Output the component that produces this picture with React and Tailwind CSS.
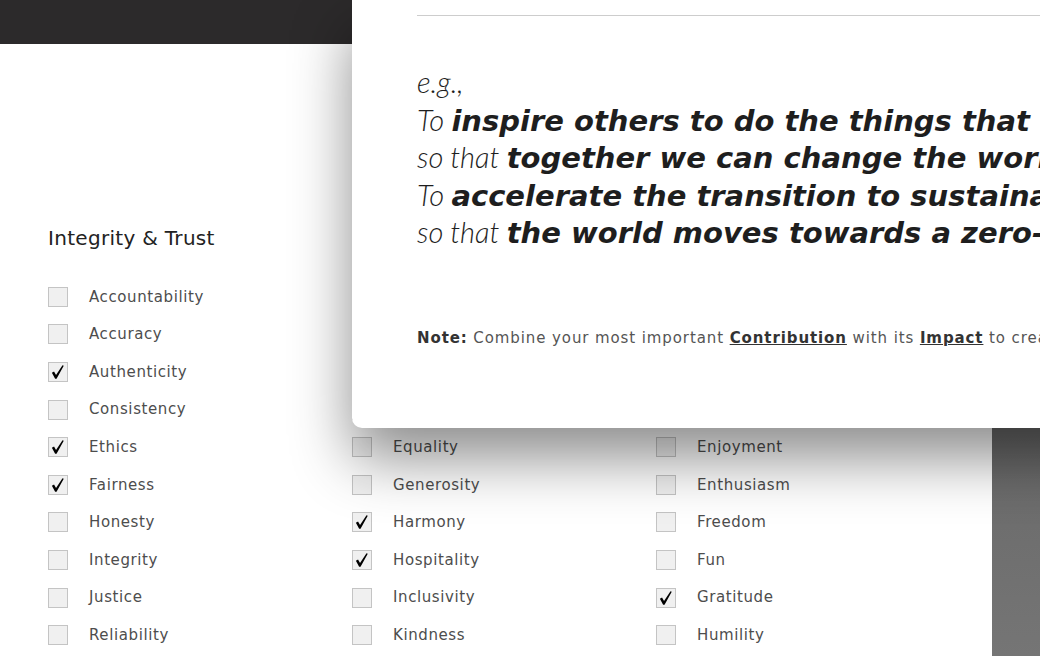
import React from "react";

const columns = [
  {
    title: "Integrity & Trust",
    items: [
      ["Accountability", false],
      ["Accuracy", false],
      ["Authenticity", true],
      ["Consistency", false],
      ["Ethics", true],
      ["Fairness", true],
      ["Honesty", false],
      ["Integrity", false],
      ["Justice", false],
      ["Reliability", false],
    ],
  },
  {
    title: "Care & Community",
    items: [
      ["Compassion", false],
      ["Cooperation", false],
      ["Dignity", false],
      ["Empathy", false],
      ["Equality", false],
      ["Generosity", false],
      ["Harmony", true],
      ["Hospitality", true],
      ["Inclusivity", false],
      ["Kindness", false],
    ],
  },
  {
    title: "Joy & Wellbeing",
    items: [
      ["Adventure", false],
      ["Balance", false],
      ["Calm", false],
      ["Curiosity", false],
      ["Enjoyment", false],
      ["Enthusiasm", false],
      ["Freedom", false],
      ["Fun", false],
      ["Gratitude", true],
      ["Humility", false],
    ],
  },
];

const examples = [
  ["To ", "inspire others to do the things that inspire them,"],
  ["so that ", "together we can change the world."],
  ["To ", "accelerate the transition to sustainable energy,"],
  ["so that ", "the world moves towards a zero-carbon future."],
];

function Check() {
  return (
    <svg viewBox="0 0 20 20" className="h-[20px] w-[20px]">
      <path d="M3.2 10.8 L5.6 9.4 L7.8 13.2 L15.0 2.4 L16.4 3.0 L8.4 17.4 L6.8 17.4 Z" fill="#000" />
    </svg>
  );
}

function ValueRow({ label, checked }) {
  return (
    <label className="flex h-[37.6px] items-center">
      <span className="flex h-[20px] w-[20px] shrink-0 items-center justify-center border border-[#c4c4c4] bg-[#f0f0f0]">
        {checked && <Check />}
      </span>
      <span className="ml-[21px] text-[15px] tracking-[0.6px] text-[#4d4d4d]">{label}</span>
    </label>
  );
}

export default function App() {
  return (
    <div className="relative h-[656px] w-[1040px] overflow-hidden bg-white" style={{ fontFamily: "'DejaVu Sans', sans-serif" }}>
      <header className="h-[44px] bg-[#2c2a2b]" />

      <div className="flex h-[612px]">
        <main className="grid flex-1 grid-cols-[304px_304px_1fr] pl-[48px] pt-[181px]">
          {columns.map((col) => (
            <section key={col.title}>
              <h3 className="mb-[27px] h-[26px] text-[20px] leading-[26px] tracking-[0.3px] text-[#222]">{col.title}</h3>
              {col.items.map(([label, checked]) => (
                <ValueRow key={label} label={label} checked={checked} />
              ))}
            </section>
          ))}
        </main>
        <aside className="w-[48px] bg-gradient-to-b from-[#555] to-[#757575]" />
      </div>

      {/* purpose statement dialog */}
      <div className="absolute left-[352px] top-0 h-[428px] w-[760px] rounded-bl-[10px] bg-white pl-[65px] shadow-[0_30px_60px_rgba(0,0,0,0.45)]">
        <div className="mt-[15px] border-t border-[#cdcdcd]" />
        <div className="mt-[47px] whitespace-nowrap text-[29px] italic leading-[37.5px] text-[#1e1e1e]">
          <p className="h-[37.5px] font-['Lato'] font-light">e.g.,</p>
          {examples.map(([lead, strong]) => (
            <p key={strong} className="h-[37.5px]">
              <span className="font-['Lato'] font-light">{lead}</span>
              <span className="font-bold">{strong}</span>
            </p>
          ))}
        </div>
        <p className="mt-[76px] whitespace-nowrap text-[15px] tracking-[0.9px] text-[#555]">
          <span className="font-bold text-[#333]">Note:</span> Combine your most important{" "}
          <span className="font-bold text-[#333] underline">Contribution</span> with its{" "}
          <span className="font-bold text-[#333] underline">Impact</span> to create your Purpose statement.
        </p>
      </div>
    </div>
  );
}
